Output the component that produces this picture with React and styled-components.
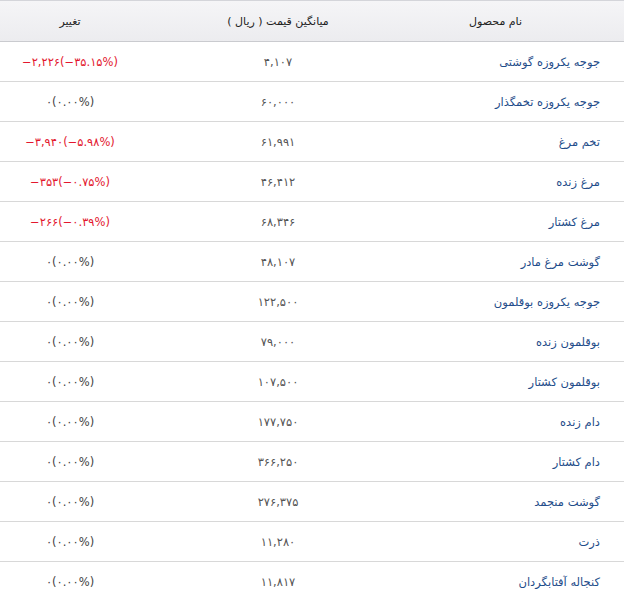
import React from 'react'
import styled, { createGlobalStyle } from 'styled-components'

const GlobalStyle = createGlobalStyle`
  html, body {
    margin: 0;
    padding: 0;
    background: #fff;
  }
  body {
    font-family: "DejaVu Sans", "Noto Sans", sans-serif;
  }
`

const Table = styled.div`
  direction: rtl;
  width: 624px;
  display: grid;
  grid-template-columns: 208px 276px 140px;
`

const HeadCell = styled.div`
  height: 40px;
  display: flex;
  align-items: center;
  justify-content: ${props => (props.$pad ? 'flex-start' : 'center')};
  padding-right: ${props => props.$pad || 0}px;
  border-top: 1px solid #d4d5da;
  border-bottom: 1px solid #cacbcf;
  background: linear-gradient(to bottom, #f5f5f7 0%, #ececef 100%);
  font-size: 11px;
  color: #222;
`

const Cell = styled.div`
  height: 39px;
  display: flex;
  align-items: center;
  justify-content: ${props => (props.$name ? 'flex-start' : 'center')};
  padding-right: ${props => (props.$name ? 24 : 0)}px;
  border-bottom: 1px solid ${props => (props.$last ? 'transparent' : '#d8d8d8')};
  font-size: 11.5px;
`

const Name = styled.span`
  color: #1f4d8a;
`

const Price = styled.span`
  direction: ltr;
  unicode-bidi: isolate;
  color: #555;
  letter-spacing: 2px;
  font-size: 11.5px;
`

const Change = styled.span`
  direction: ltr;
  unicode-bidi: isolate;
  color: ${props => (props.$down ? '#e3172e' : '#444')};
  letter-spacing: 1.6px;
  font-size: 11.5px;
`

const rows = [
  ['جوجه یکروزه گوشتی', '۴,۱۰۷', '−۲,۲۲۶(−۳۵.۱۵%)', true],
  ['جوجه یکروزه تخمگذار', '۶۰,۰۰۰', '۰(۰.۰۰%)', false],
  ['تخم مرغ', '۶۱,۹۹۱', '−۳,۹۴۰(−۵.۹۸%)', true],
  ['مرغ زنده', '۴۶,۴۱۲', '−۳۵۳(−۰.۷۵%)', true],
  ['مرغ کشتار', '۶۸,۳۴۶', '−۲۶۶(−۰.۳۹%)', true],
  ['گوشت مرغ مادر', '۴۸,۱۰۷', '۰(۰.۰۰%)', false],
  ['جوجه یکروزه بوقلمون', '۱۲۲,۵۰۰', '۰(۰.۰۰%)', false],
  ['بوقلمون زنده', '۷۹,۰۰۰', '۰(۰.۰۰%)', false],
  ['بوقلمون کشتار', '۱۰۷,۵۰۰', '۰(۰.۰۰%)', false],
  ['دام زنده', '۱۷۷,۷۵۰', '۰(۰.۰۰%)', false],
  ['دام کشتار', '۳۶۶,۲۵۰', '۰(۰.۰۰%)', false],
  ['گوشت منجمد', '۲۷۶,۳۷۵', '۰(۰.۰۰%)', false],
  ['ذرت', '۱۱,۲۸۰', '۰(۰.۰۰%)', false],
  ['کنجاله آفتابگردان', '۱۱,۸۱۷', '۰(۰.۰۰%)', false],
]

export default function App() {
  return (
    <>
      <GlobalStyle />
      <Table>
        <HeadCell $pad={102}>نام محصول</HeadCell>
        <HeadCell>میانگین قیمت ( ریال )</HeadCell>
        <HeadCell>تغییر</HeadCell>
        {rows.map(([name, price, change, down], i) => {
          const last = i === rows.length - 1
          return (
            <React.Fragment key={name}>
              <Cell $name $last={last}>
                <Name>{name}</Name>
              </Cell>
              <Cell $last={last}>
                <Price>{price}</Price>
              </Cell>
              <Cell $last={last}>
                <Change $down={down}>{change}</Change>
              </Cell>
            </React.Fragment>
          )
        })}
      </Table>
    </>
  )
}
